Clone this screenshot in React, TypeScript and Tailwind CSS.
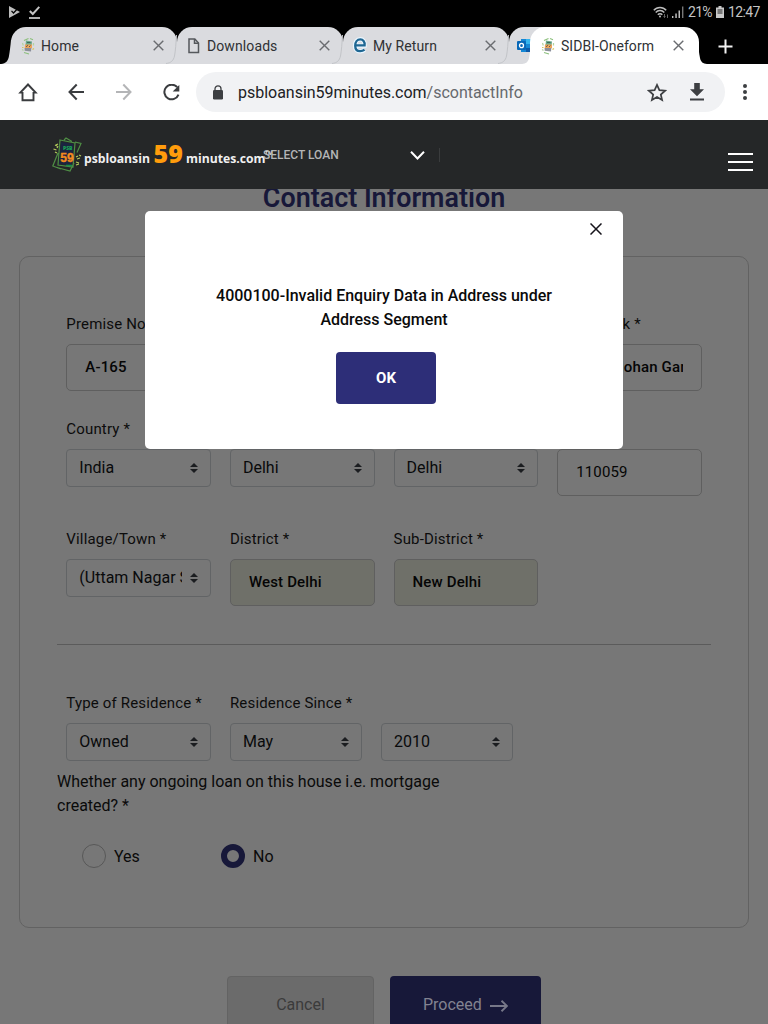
import React from "react";

const TabEdge = () => (
  <svg className="absolute right-0 top-0" width="12" height="37" viewBox="0 0 12 37" fill="none">
    <path d="M11.500 8 C11 16 10.500 24 9.500 29 C8.500 33.500 6 36 1 36.500" stroke="#c2c4c8" strokeWidth="1" />
  </svg>
);

const Close = ({ color = "#6a6c70" }: { color?: string }) => (
  <svg width="11" height="11" viewBox="0 0 11 11" stroke={color} strokeWidth="1.400">
    <path d="M.7.7l9.600 9.600M10.300.7L.7 10.300" />
  </svg>
);

const Favicon = () => (
  <svg width="14" height="18" viewBox="0 0 14 18">
    <path d="M3 3.500l4.500-2M9 1.500l3 1.200M3 15.500l5 1.500" stroke="#8cc07c" strokeWidth="1.200" fill="none" />
    <path d="M1.500 6l.8 2.500M12.500 6v2.500M1 12.500l1.500 1" stroke="#b4d3a0" strokeWidth="1.200" />
    <path d="M5 3.500l6 1-.3 3.500H4.500z" fill="#6aa98a" />
    <path d="M4 7.500h7v3.700H3.700z" fill="#eda45a" />
    <path d="M3.600 11h6.700l-.3 3.500-6.300-.7z" fill="#8b8f9a" />
    <path d="M5 9.800l2-1.500M8 10l1.500-1.500" stroke="#6b5a48" strokeWidth="1" />
    <path d="M6 5.500h3.500" stroke="#42675c" strokeWidth="1" />
    <path d="M11.500 12.500l1.500-1M1 10.500h1.500" stroke="#d8c25a" strokeWidth="1.200" />
  </svg>
);

const FileIcon = () => (
  <svg width="12" height="16" viewBox="0 0 12 16" fill="none" stroke="#55585c" strokeWidth="1.500">
    <path d="M1 1h5.800L10.500 5v9.500H1z" />
    <path d="M6.500 1v4.300h4" />
  </svg>
);

const EIcon = () => (
  <svg className="-mt-[1px]" width="16" height="17" viewBox="0 0 16 17" fill="none">
    <path d="M3.200 8.600h9.400C13 4.500 10.800 2.300 8.300 2.300 5 2.300 3 5.200 3 8.700c0 3.500 2 5.600 5 5.600 2 0 3.500-.6 4.600-1.700" stroke="#eaf6ff" strokeWidth="4.400" />
    <path d="M3.200 8.300h9.400C13 4.500 10.900 2.400 8.400 2.400 5.200 2.400 3.200 5.200 3.200 8.700c0 3.400 1.900 5.400 4.900 5.400 1.900 0 3.300-.5 4.400-1.500" stroke="#1f6793" strokeWidth="2.300" />
  </svg>
);

function Tab({ title, icon }: { title: string; icon: React.ReactNode }) {
  return (
    <div className="relative flex h-[37px] w-[166px] shrink-0 items-center rounded-t-[15px] bg-[#dadbdf] pl-[9px] text-[14px] tracking-[0.1px] text-[#2f3134]">
      <span className="flex w-[16px] justify-center">{icon}</span>
      <span className="ml-[5px] mt-[2px] flex-1">{title}</span>
      <span className="mb-[1px] mr-[13px]"><Close /></span>
      <TabEdge />
    </div>
  );
}

const Arrows = () => (
  <svg className="shrink-0" width="8" height="10" viewBox="0 0 8 10" fill="#1b1d20">
    <path d="M4 0l4 4H0zM4 10L0 6h8z" />
  </svg>
);

function Select({ value, className = "" }: { value: string; className?: string }) {
  return (
    <div className={"flex h-[38px] items-center rounded-[4px] border border-[#626466] pl-[12px] pr-[12px] text-[16px] text-[#090a0b] " + className}>
      <span className="mr-[8px] flex-1 overflow-hidden whitespace-nowrap leading-[24px]">{value}</span>
      <Arrows />
    </div>
  );
}

function Input({ value, className = "" }: { value: string; className?: string }) {
  return (
    <div className={"flex h-[47px] items-center rounded-[5px] border border-[#5f5f5f] px-[18px] text-[15px] tracking-[0.15px] text-[#050505] " + className}>
      <span className="overflow-hidden whitespace-nowrap">{value}</span>
    </div>
  );
}

function Field({ label, children, right = false }: { label: string; children: React.ReactNode; right?: boolean }) {
  return (
    <div className="px-[9.5px]">
      <div className={"mb-[8px] h-[24px] whitespace-nowrap text-[15px] leading-[24px] tracking-[0.17px] text-[#0c0c0c] " + (right ? "pr-[61px] text-right" : "")}>{label}</div>
      {children}
    </div>
  );
}

function StatusBar() {
  return (
    <div className="flex h-[27px] shrink-0 items-center justify-between bg-black pl-[9px] pr-[8px] text-[#c4c4c4]">
      <div className="flex items-center gap-[9px] pb-[3px]">
        <svg width="11" height="12" viewBox="0 0 11 12"><path d="M0 0l11 6-11 6z" fill="#bdbdbd" /><path d="M2.500 4.800l2 2.200 4.700-5" fill="none" stroke="#000" strokeWidth="1.200" /></svg>
        <svg width="11" height="13" viewBox="0 0 11 13" fill="none" stroke="#c4c4c4"><path d="M.8 5l3 3L10.300.8" strokeWidth="2" /><path d="M0 12h11" strokeWidth="1.800" /></svg>
      </div>
      <div className="flex items-center pb-[3px]">
        <svg width="17" height="13" viewBox="0 0 17 13" fill="none" stroke="#bdbdbd" strokeWidth="1.400"><path d="M.8 4.200C4 .5 10 .5 13.200 4.200M2.700 6.500c2.300-2.600 6.300-2.600 8.600 0M4.800 8.800c1.200-1.400 3.300-1.400 4.500 0" /><circle cx="7" cy="10.500" r="1" fill="#bdbdbd" stroke="none" /><path d="M11.500 8v3.500m-1-1l1 1 1-1M14.500 12V8.500" stroke="#666" strokeWidth="1" /></svg>
        <svg className="ml-[2px]" width="12" height="12" viewBox="0 0 12 12" fill="#bdbdbd"><path d="M0 10h1.400v2H0zM3.300 7.500h1.500V12H3.300zM6.500 4.500H8V12H6.500z" /><path d="M10 .5h1.400V12H10z" fill="#777" /></svg>
        <span className="ml-[4px] w-[24px] whitespace-nowrap text-[14px] tracking-[-0.7px]">21%</span>
        <svg className="ml-[4px]" width="8" height="12" viewBox="0 0 8 12"><path d="M2.500 0h3v1.500H8V12H0V1.500h2.500z" fill="#c8c8c8" /><path d="M1.500 3h5v5h-5z" fill="#777" /></svg>
        <span className="ml-[4px] w-[32px] whitespace-nowrap text-[14px] tracking-[-0.6px]">12:47</span>
      </div>
    </div>
  );
}

function TabStrip() {
  return (
    <div className="relative flex h-[37px] shrink-0 bg-black pl-[11px]">
      <svg className="absolute bottom-0 left-0" width="13" height="24" viewBox="0 0 13 24"><path d="M13 0h-2c-.5 6-1.300 12-2 16-.9 5-3 7.500-8 8H13z" fill="#dadbdf" /></svg>
      <Tab title="Home" icon={<Favicon />} />
      <Tab title="Downloads" icon={<FileIcon />} />
      <Tab title="My Return" icon={<EIcon />} />
      <div className="flex h-[37px] w-[36px] shrink-0 items-center rounded-tl-[15px] bg-[#dadbdf] pl-[8px]">
        <svg width="15" height="15" viewBox="0 0 15 15"><path d="M4 1h11v13H4z" fill="#1687d4" /><path d="M9 1h6v5H9z" fill="#35b4ed" /><path d="M9 10h6v4H9z" fill="#0d5aa8" /><rect y="3" width="9" height="9" rx="1" fill="#0868b8" /><ellipse cx="4.500" cy="7.500" rx="2" ry="2.200" fill="none" stroke="#fff" strokeWidth="1.300" /></svg>
      </div>
      <div className="relative -ml-[15px] flex h-[37px] w-[169px] shrink-0 items-center rounded-t-[15px] bg-white pl-[10px] text-[14px] text-[#2f3134]">
        <svg className="absolute -left-[8px] bottom-0" width="9" height="22" viewBox="0 0 9 22"><path d="M9 0C8.500 6 8 11 7 16c-.8 4-3 5.700-7 6h9z" fill="#fff" /></svg>
        <svg className="absolute -right-[8px] bottom-0" width="9" height="22" viewBox="0 0 9 22"><path d="M0 0c.5 6 1 11 2 16 .8 4 3 5.700 7 6H0z" fill="#fff" /></svg>
        <span className="flex w-[16px] justify-center"><Favicon /></span>
        <span className="ml-[5px] mt-[2px] flex-1 whitespace-nowrap tracking-[0.05px]">SIDBI-Oneform</span>
        <span className="mb-[1px] mr-[15px]"><Close /></span>
      </div>
      <svg className="ml-[19px] mt-[12px]" width="15" height="15" viewBox="0 0 15 15" stroke="#f2f2f2" strokeWidth="2"><path d="M7.500.5v14M.5 7.500h14" /></svg>
    </div>
  );
}

function Toolbar() {
  return (
    <div className="flex h-[56px] shrink-0 items-center bg-white pl-[18px]">
      <svg width="20" height="20" viewBox="0 0 20 20" fill="none" stroke="#3a3c3f" strokeWidth="1.900"><path d="M4.500 10v8.200h11V10" /><path d="M4.500 10.500H2.400L10 2.500l7.600 8h-2.100" /></svg>
      <svg className="ml-[30px]" width="17" height="18" viewBox="0 0 17 18" fill="none" stroke="#3a3c3f" strokeWidth="2"><path d="M16 9H1.500M8.700 1.500L1.500 9l7.200 7.500" /></svg>
      <svg className="ml-[30px]" width="17" height="18" viewBox="0 0 17 18" fill="none" stroke="#b4b5b7" strokeWidth="2"><path d="M1 9h14.500M8.300 1.500L15.500 9l-7.200 7.500" /></svg>
      <svg className="ml-[31px]" width="17" height="17" viewBox="0 0 17 17"><path d="M14.200 3.200A7.300 7.300 0 1 0 15.500 10.600" fill="none" stroke="#3a3c3f" strokeWidth="2" /><path d="M16.300 1v6.600H9.700z" fill="#3a3c3f" /></svg>
      <div className="ml-[16px] flex h-[40px] w-[529px] items-center rounded-full bg-[#f1f2f4] pl-[16px]">
        <svg width="12" height="15" viewBox="0 0 12 15"><rect x="1" y="5" width="10" height="9.500" rx="1.200" fill="#3d3f42" /><path d="M3 6V3.800a3 3 0 0 1 6 0V6" fill="none" stroke="#3d3f42" strokeWidth="1.300" /></svg>
        <span className="ml-[14px] mt-[2px] flex-1 whitespace-nowrap text-[16px] tracking-[-0.02px] text-[#202124]">psbloansin59minutes.com<span className="text-[#66696d]">/scontactInfo</span></span>
        <svg className="mr-[23px]" width="20" height="19" viewBox="0 0 20 19" fill="none" stroke="#3d3f42" strokeWidth="1.700"><path d="M10 1.900l2.400 5.300 5.700.5-4.300 3.800 1.300 5.600L10 14.100l-5.100 3 1.300-5.600L1.900 7.700l5.700-.5z" /></svg>
        <svg className="mr-[21px]" width="14" height="18" viewBox="0 0 14 18" fill="#3d3f42"><path d="M4.200 0h5.600v6.300H14L7 13.300 0 6.300h4.200zM0 15.500h14v2H0z" /></svg>
      </div>
      <svg className="ml-[18px]" width="4" height="16" viewBox="0 0 4 16" fill="#3d3f42"><circle cx="2" cy="2" r="2" /><circle cx="2" cy="8" r="2" /><circle cx="2" cy="14" r="2" /></svg>
    </div>
  );
}

function SiteHeader() {
  return (
    <div className="relative flex h-[69px] shrink-0 items-center bg-[#252728] pl-[52px]">
      <svg width="31" height="36" viewBox="0 0 31 36" fill="none">
        <path d="M8 3l15 3-2 24-15-2zM12 3l2-2 6 3.500M23 5l6 1.500-4 9M6 16L.8 29l8 3M5 30.500l13 3.500 4-8" stroke="#4f8e45" strokeWidth="1.200" />
        <path d="M9 5l12.500 2-2 21-12.500-1z" fill="#1b2540" />
        <path d="M3 8l2 1M1.500 12l3 1M5 11l1-2M3 15l2 1M6 7L4 8M25 22l3-1M24 25l3 1M27 18l2 1M24 20l2-1M24 28l3-1" stroke="#b5cc5b" strokeWidth="1.200" />
        <text x="11" y="12.500" fontFamily="Open Sans, sans-serif" fontSize="5" fontWeight="800" fill="#1aa254">PSB</text>
        <text x="8.300" y="24.500" fontFamily="Liberation Sans, sans-serif" fontSize="12" fontWeight="700" fill="#f58a1e" stroke="#f58a1e" strokeWidth=".4">59</text>
        <path d="M14 28.500h6" stroke="#178a49" strokeWidth="1.600" />
      </svg>
      <div className="ml-px flex items-baseline whitespace-nowrap pb-[2px] font-['Open_Sans',sans-serif] text-[12.200px] font-bold text-[#f0f0f0]">
        <span className="w-[69.500px]">psbloansin</span>
        <span className="w-[32.500px] text-[25px] font-extrabold leading-[30px] text-[#ff9c0c]">59</span>
        <span className="w-[79px]">minutes.com</span>
        <span className="relative -top-[8px] text-[5px] leading-[5px]">TM</span>
      </div>
      <span className="absolute left-[263px] top-[26px] whitespace-nowrap text-[12px] font-medium leading-[18px] text-[#b4b5b6]">SELECT LOAN</span>
      <svg className="absolute left-[410px] top-[30px]" width="15" height="11" viewBox="0 0 15 11" fill="none" stroke="#fff" strokeWidth="2"><path d="M1 1.800l6.500 6.700L14 1.800" /></svg>
      <div className="absolute left-[439px] top-[28px] h-[14px] w-px bg-[#3a3c3d]" />
      <div className="ml-auto mr-[15px] mt-[14px] flex w-[25px] flex-col gap-[6px]">
        <div className="h-[2px] bg-white" />
        <div className="h-[2px] bg-white" />
        <div className="h-[2px] bg-white" />
      </div>
    </div>
  );
}

function Modal() {
  return (
    <div className="absolute left-[145px] top-[211px] flex h-[238px] w-[478px] flex-col items-center rounded-[5px] bg-white">
      <div className="flex h-[73px] w-full justify-end pr-[21px] pt-[12px]">
        <svg width="12" height="12" viewBox="0 0 12 12" stroke="#15131a" strokeWidth="1.500"><path d="M.5.5l11 11M11.500.5l-11 11" /></svg>
      </div>
      <p className="w-[360px] text-center text-[16px] font-medium leading-[24px] text-[#0a0a0a]">
        4000100-Invalid Enquiry Data in Address under<br />Address Segment
      </p>
      <button className="ml-[4px] mt-[20px] h-[52px] w-[100px] rounded-[4px] bg-[#2d2e78] text-[15px] font-bold text-white">OK</button>
    </div>
  );
}

export default function App() {
  return (
    <div className="relative flex h-[1024px] w-[768px] flex-col overflow-hidden bg-[#777777] font-[Roboto,sans-serif]">
      <StatusBar />
      <TabStrip />
      <Toolbar />
      <SiteHeader />
      <main className="flex min-h-0 flex-1 flex-col overflow-hidden">
        <h1 className="-mt-[9px] h-[76px] shrink-0 text-center text-[26.900px] font-semibold leading-[36px] text-[#171839]">Contact Information</h1>
        <section className="mx-[19px] h-[672px] shrink-0 rounded-[10px] border border-[#626262] px-[37px] pt-[55px]">
          <div className="-ml-[0.2px] grid w-[654.5px] grid-cols-4">
            <Field label="Premise No. *"><Input value="A-165" className="font-medium" /></Field>
            <Field label=""><Input value="" /></Field>
            <Field label=""><Input value="" /></Field>
            <Field label="Landmark *" right><Input value="B11, Mohan Garden" className="font-medium" /></Field>
          </div>
          <div className="-ml-[0.2px] mt-[26px] grid w-[654.5px] grid-cols-4">
            <Field label="Country *"><Select value="India" /></Field>
            <Field label="State *"><Select value="Delhi" /></Field>
            <Field label="City *"><Select value="Delhi" /></Field>
            <Field label="PIN *"><Input value="110059" /></Field>
          </div>
          <div className="-ml-[0.2px] mt-[31px] grid w-[654.5px] grid-cols-4">
            <Field label="Village/Town *"><Select value="(Uttam Nagar S.O)" /></Field>
            <Field label="District *"><Input value="West Delhi" className="bg-[#6f7069] font-medium" /></Field>
            <Field label="Sub-District *"><Input value="New Delhi" className="bg-[#6f7069] font-medium" /></Field>
          </div>
          <div className="mt-[38px] h-px w-[654px] bg-[#5b5b5b]" />
          <div className="-ml-[0.2px] mt-[46px] grid w-[654.5px] grid-cols-4">
            <Field label="Type of Residence *"><Select value="Owned" /></Field>
            <Field label="Residence Since *">
              <div className="flex gap-[19px]">
                <Select value="May" className="w-[132px] shrink-0" />
                <Select value="2010" className="w-[132px] shrink-0" />
              </div>
            </Field>
          </div>
          <p className="mt-[9px] w-[410px] text-[16px] leading-[24px] text-[#0a0a0a]">Whether any ongoing loan on this house i.e. mortgage created? *</p>
          <div className="mt-[26px] flex pl-[25px] text-[16px] leading-[26px] text-[#0a0a0a]">
            <div className="flex w-[139px] gap-[8px]"><span className="size-[24px] rounded-full border border-[#585858]" />Yes</div>
            <div className="flex gap-[8px]"><span className="size-[24px] rounded-full border-[6px] border-[#171839]" />No</div>
          </div>
        </section>
        <div className="mt-[48px] flex shrink-0 gap-[16px] pl-[227px] text-[16px]">
          <div className="flex h-[57px] w-[147px] items-center justify-center rounded-[4px] border border-[#636363] bg-[#6b6b6b] text-[#3b3b3b]">Cancel</div>
          <div className="flex h-[57px] w-[151px] items-center rounded-[4px] bg-[#171839] pl-[33px] text-[#828391]">
            Proceed
            <svg className="ml-[8px] mt-[2px]" width="18" height="12" viewBox="0 0 18 12" fill="none" stroke="#777889" strokeWidth="1.900"><path d="M0 6h17M11.500.7L17 6l-5.500 5.300" /></svg>
          </div>
        </div>
      </main>
      <Modal />
    </div>
  );
}
